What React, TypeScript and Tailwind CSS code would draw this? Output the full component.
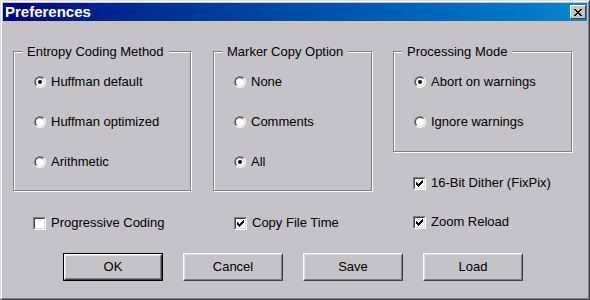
import type { ReactNode } from "react";

const CHECK = ["......X", ".....XX", "X...XXX", "XX.XXX.", "XXXXX..", ".XXX...", "..X...."];
const CLOSE = ["XX....XX", ".XX..XX.", "..XXXX..", "...XX...", "..XXXX..", ".XX..XX.", "XX....XX"];

function Pixels({ rows }: { rows: string[] }) {
  const w = rows[0].length;
  const h = rows.length;
  return (
    <svg width={w} height={h} viewBox={`0 0 ${w} ${h}`} shapeRendering="crispEdges">
      {rows.flatMap((row, y) =>
        row.split("").map((c, x) => (c === "X" ? <rect key={`${x}-${y}`} x={x} y={y} width={1} height={1} fill="#000" /> : null))
      )}
    </svg>
  );
}

function Radio({ label, checked }: { label: string; checked?: boolean }) {
  return (
    <div className="flex items-center h-[40px]">
      <div className="w-[12px] h-[12px] rounded-full border border-t-[#808080] border-l-[#808080] border-r-white border-b-white">
        <div className="w-full h-full rounded-full border border-t-[#404040] border-l-[#404040] border-r-[#dfdfdf] border-b-[#dfdfdf] bg-white flex items-center justify-center">
          {checked && <div className="w-[4px] h-[4px] rounded-full bg-black" />}
        </div>
      </div>
      <span className="ml-[5px]">{label}</span>
    </div>
  );
}

function Check({ label, checked, className = "" }: { label: string; checked?: boolean; className?: string }) {
  return (
    <div className={`flex items-center h-[20px] ${className}`}>
      <div className="w-[13px] h-[13px] border border-t-[#808080] border-l-[#808080] border-r-white border-b-white">
        <div className="w-full h-full border border-t-[#404040] border-l-[#404040] border-r-[#dfdfdf] border-b-[#dfdfdf] bg-white flex items-center justify-center">
          {checked && <Pixels rows={CHECK} />}
        </div>
      </div>
      <span className="ml-[5px]">{label}</span>
    </div>
  );
}

function Group({ title, className, children }: { title: string; className: string; children: ReactNode }) {
  return (
    <div className={`relative border border-[#808080] shadow-[inset_1px_1px_0_#fff,1px_1px_0_#fff] pt-[10px] pl-[20px] ${className}`}>
      <span className="absolute left-[8px] -top-[8px] px-[5px] leading-[15px] bg-[#c5c3c8]">{title}</span>
      {children}
    </div>
  );
}

function Button({ label, isDefault }: { label: string; isDefault?: boolean }) {
  return (
    <div className={`w-[100px] h-[28px] ${isDefault ? "border border-black" : ""}`}>
      <div className="w-full h-full border border-t-white border-l-white border-r-[#404040] border-b-[#404040]">
        <div className="w-full h-full border border-t-[#dfdfdf] border-l-[#dfdfdf] border-r-[#808080] border-b-[#808080] flex items-center justify-center">
          {label}
        </div>
      </div>
    </div>
  );
}

export default function App() {
  return (
    <div className="w-[590px] h-[300px] bg-[#c5c3c8] text-black text-[13px] font-['Liberation_Sans',Arial,sans-serif]">
      <div className="w-full h-full border border-t-[#dfdfdf] border-l-[#dfdfdf] border-r-[#404040] border-b-[#404040]">
        <div className="w-full h-full border border-t-white border-l-white border-r-[#808080] border-b-[#808080] p-[1px]">
          {/* title bar */}
          <div className="h-[18px] flex items-center justify-between pl-[2px] pr-[1px] bg-gradient-to-r from-[#000080] to-[#1084d0]">
            <span className="text-white font-bold text-[15px] leading-[18px]">Preferences</span>
            <div className="w-[16px] h-[14px] bg-[#c5c3c8] border border-t-white border-l-white border-r-[#404040] border-b-[#404040] flex items-center justify-center">
              <Pixels rows={CLOSE} />
            </div>
          </div>

          <div className="pt-[30px] pl-[10px]">
            <div className="flex items-start">
              <div className="w-[200px]">
                <Group title="Entropy Coding Method" className="w-[178px] h-[140px]">
                  <Radio label="Huffman default" checked />
                  <Radio label="Huffman optimized" />
                  <Radio label="Arithmetic" />
                </Group>
                <Check label="Progressive Coding" className="mt-[22px] pl-[20px]" />
              </div>
              <div className="w-[180px]">
                <Group title="Marker Copy Option" className="w-[159px] h-[140px]">
                  <Radio label="None" />
                  <Radio label="Comments" />
                  <Radio label="All" checked />
                </Group>
                <Check label="Copy File Time" checked className="mt-[22px] pl-[21px]" />
              </div>
              <div>
                <Group title="Processing Mode" className="w-[179px] h-[101px]">
                  <Radio label="Abort on warnings" checked />
                  <Radio label="Ignore warnings" />
                </Group>
                <Check label="16-Bit Dither (FixPix)" checked className="mt-[21px] pl-[20px]" />
                <Check label="Zoom Reload" checked className="mt-[19px] pl-[20px]" />
              </div>
            </div>

            <div className="flex gap-[20px] mt-[20px] pl-[50px]">
              <Button label="OK" isDefault />
              <Button label="Cancel" />
              <Button label="Save" />
              <Button label="Load" />
            </div>
          </div>
        </div>
      </div>
    </div>
  );
}
